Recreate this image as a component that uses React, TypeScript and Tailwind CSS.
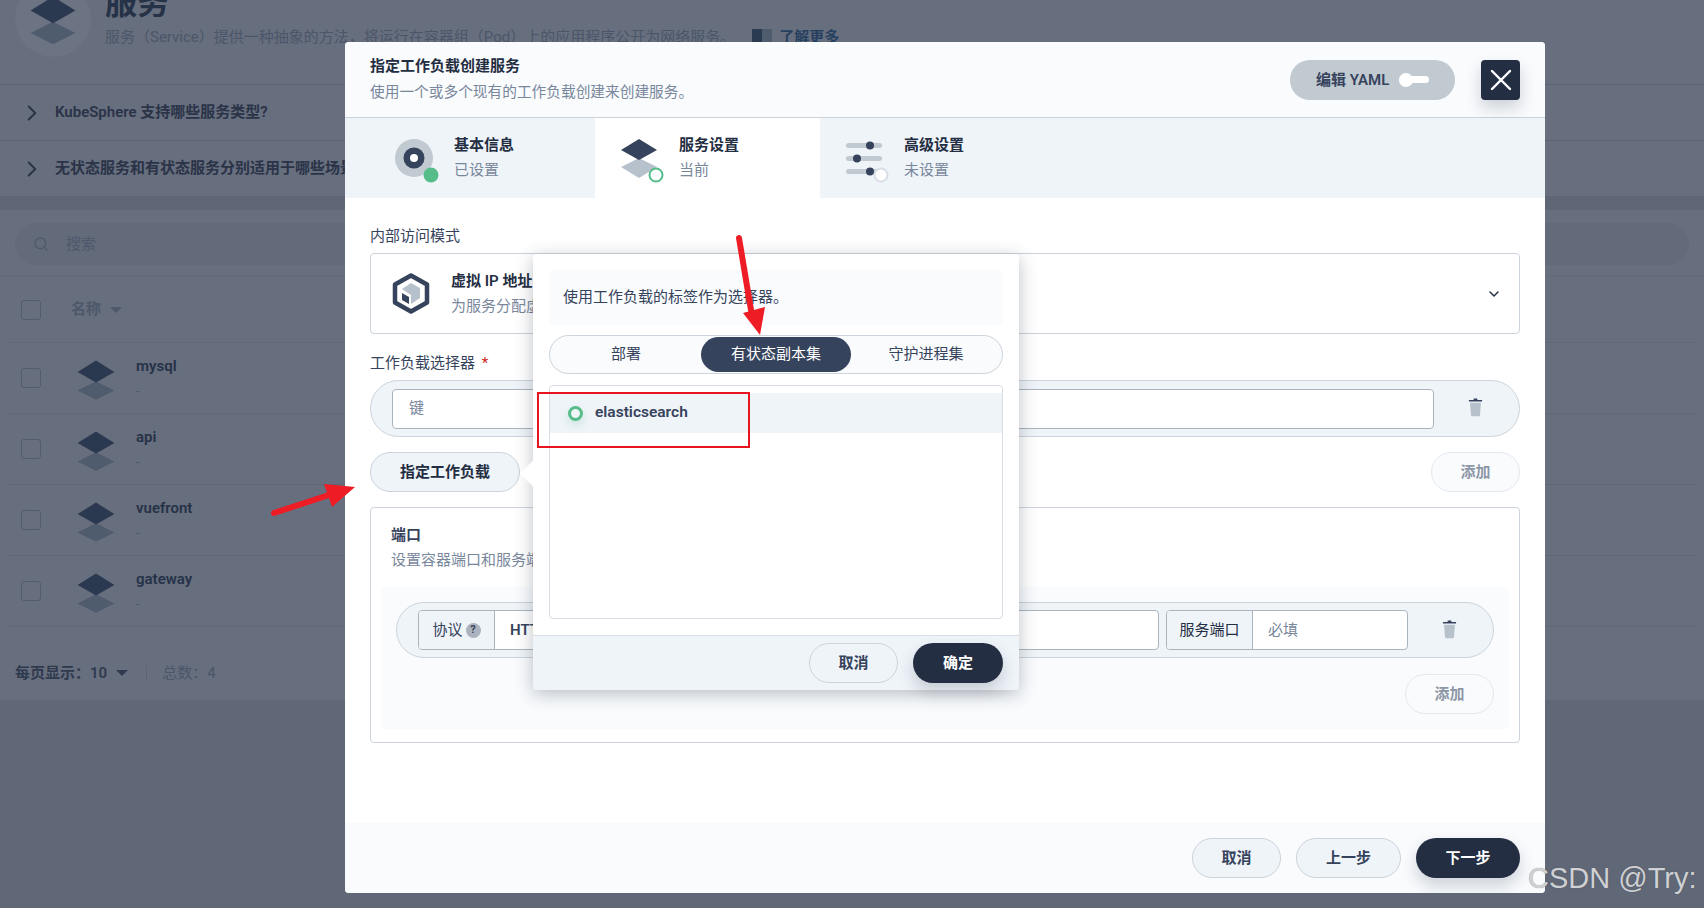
import { ChevronDown, ChevronRight, Search, X } from 'lucide-react';

const services = ['mysql', 'api', 'vuefront', 'gateway'];

const Layers = ({ top, bottom, className }: { top: string; bottom: string; className: string }) => (
  <svg viewBox="0 0 40 40" className={className}>
    <path d="M20 22 L36 30 L20 38 L4 30 Z" fill={bottom} />
    <path d="M20 4 L36 14 L20 23 L4 14 Z" fill={top} />
  </svg>
);

const Trash = () => (
  <svg viewBox="0 0 16 20" className="w-[15px] h-[19px]">
    <path d="M6 0.5h4v1.5h5v1.6H1V2h5z" fill="#36435c" />
    <path d="M2.2 5h11.6l-1 13a1.5 1.5 0 0 1-1.5 1.4H4.7a1.5 1.5 0 0 1-1.5-1.4z" fill="#b6c1cc" />
  </svg>
);

const PillButton = ({ label, className }: { label: string; className: string }) => (
  <div className={`h-10 rounded-[20px] flex items-center justify-center text-[15px] font-semibold ${className}`}>{label}</div>
);

const StepText = ({ title, sub }: { title: string; sub: string }) => (
  <div className="ml-[20px] -mt-[2px] flex flex-col gap-[5px]">
    <div className="text-[15px] leading-5 font-semibold text-[#242e42]">{title}</div>
    <div className="text-[15px] leading-5 text-[#79879c]">{sub}</div>
  </div>
);

export default function App() {
  return (
    <div
      className="relative w-[1704px] h-[908px] overflow-hidden bg-[#606777] text-[#36435c]"
      style={{ fontFamily: 'Roboto, "Noto Sans CJK SC", sans-serif' }}
    >
      {/* Page behind the dialog */}
      <div className="h-[700px] flex flex-col bg-[#676e7d]">
        <div className="h-[84px] -mt-[19px] pl-[15px] flex shrink-0">
          <div className="w-[76px] h-[76px] rounded-full bg-[#6c7383] flex items-center justify-center">
            <Layers top="#2b3950" bottom="#4f5c6e" className="w-[56px] h-[56px]" />
          </div>
          <div className="ml-[14px]">
            <div className="text-[32px] leading-[44px] font-bold text-[#263248]">服务</div>
            <div className="mt-[2px] flex items-center text-[15px] leading-5 text-[#4b566a] whitespace-nowrap">
              服务（Service）提供一种抽象的方法，将运行在容器组（Pod）上的应用程序公开为网络服务。
              <span className="ml-[17px] w-[10px] h-[16px] bg-[#2a3a50]" />
              <span className="w-[10px] h-[16px] bg-[#4f5c6e]" />
              <span className="ml-[7px] font-semibold text-[#26415f]">了解更多</span>
            </div>
          </div>
        </div>
        <div className="h-[56px] mt-[19px] border-t border-[#5c6373] flex items-center pl-[19px] shrink-0">
          <ChevronRight className="w-[26px] h-[26px] text-[#2a3348]" strokeWidth={1.8} />
          <span className="ml-[10px] text-[15px] font-semibold text-[#2a3348]">KubeSphere 支持哪些服务类型?</span>
        </div>
        <div className="h-[56px] border-t border-[#5c6373] flex items-center pl-[19px] shrink-0">
          <ChevronRight className="w-[26px] h-[26px] text-[#2a3348]" strokeWidth={1.8} />
          <span className="ml-[10px] text-[15px] font-semibold text-[#2a3348]">无状态服务和有状态服务分别适用于哪些场景?</span>
        </div>
        <div className="h-[14px] bg-[#5f6676] shrink-0" />
        <div className="h-[67px] px-[15px] pt-[13px] border-b border-[#626979] shrink-0">
          <div className="h-[42px] rounded-[21px] bg-[#636a7a] flex items-center pl-[18px]">
            <Search className="w-[16px] h-[16px] text-[#4d5a6c]" />
            <span className="ml-[17px] text-[15px] text-[#4d586b]">搜索</span>
          </div>
        </div>
        <div className="h-[66px] mx-[6px] pl-[15px] flex items-center border-b border-[#606777] shrink-0">
          <div className="w-5 h-5 rounded-[3px] border border-[#535c6e]" />
          <span className="ml-[30px] text-[15px] font-semibold text-[#4d586b]">名称</span>
          <span className="ml-[9px] w-0 h-0 border-x-[6px] border-x-transparent border-t-[6px] border-t-[#4d586b]" />
        </div>
        {services.map((name) => (
          <div key={name} className="h-[71px] mx-[6px] pl-[15px] flex items-center border-b border-[#606777] shrink-0">
            <div className="w-5 h-5 rounded-[3px] border border-[#535c6e]" />
            <Layers top="#2b3950" bottom="#4f5c6e" className="ml-[32px] w-[46px] h-[46px] mt-[1px]" />
            <div className="ml-[17px]">
              <div className="text-[15px] leading-5 font-semibold text-[#263248]">{name}</div>
              <div className="mt-[5px] text-[12px] leading-5 text-[#4b566a]">-</div>
            </div>
          </div>
        ))}
        <div className="pl-[15px] mt-[36px] flex items-center text-[15px] leading-5 shrink-0">
          <span className="font-semibold text-[#2f3a4f]">每页显示：10</span>
          <span className="ml-[9px] w-0 h-0 border-x-[6px] border-x-transparent border-t-[6px] border-t-[#2f3a4f]" />
          <span className="ml-[18px] w-px h-[16px] bg-[#5c6373]" />
          <span className="ml-[15px] text-[#4b566a]">总数：4</span>
        </div>
      </div>

      {/* Dialog */}
      <div className="absolute left-[345px] top-[42px] w-[1200px] h-[851px] flex flex-col bg-white rounded-[4px] overflow-hidden">
        <div className="h-[76px] shrink-0 bg-[#f9fbfd] border-b border-[#ccd3db] pl-[25px] pr-[25px] flex items-center">
          <div className="flex flex-col gap-[6px] -mt-[2px]">
            <div className="text-[15px] leading-5 font-semibold text-[#242e42]">指定工作负载创建服务</div>
            <div className="text-[14.7px] leading-5 text-[#79879c]">使用一个或多个现有的工作负载创建来创建服务。</div>
          </div>
          <div className="ml-auto h-10 w-[165px] rounded-[20px] bg-[#c1c9d1] flex items-center pl-[26px] text-[15px] font-semibold text-[#36435c]">
            <span className="pt-[1px]">编辑 YAML</span>
            <span className="ml-[10px] relative w-[30px] h-[14px] flex items-center">
              <span className="w-full h-[7px] rounded-full bg-white" />
              <span className="absolute left-0 top-0 w-[14px] h-[14px] rounded-full bg-white" />
            </span>
          </div>
          <div className="ml-[26px] w-[39px] h-10 rounded-[4px] bg-[#242e42] flex items-center justify-center text-white shadow-[0_8px_16px_0_rgba(36,46,66,0.2)]">
            <X className="w-[36px] h-[36px]" strokeWidth={1.6} />
          </div>
        </div>

        <div className="h-[80px] shrink-0 bg-[#eff4f9] flex">
          <div className="w-[250px] pl-[49px] flex items-center">
            <svg viewBox="0 0 40 40" className="w-10 h-10 overflow-visible">
              <circle cx="20" cy="20" r="19" fill="#c1c9d1" />
              <circle cx="20" cy="20" r="10.5" fill="#36435c" />
              <circle cx="20" cy="20" r="4" fill="#fff" />
              <circle cx="37" cy="37" r="7.5" fill="#55bc8a" />
            </svg>
            <StepText title="基本信息" sub="已设置" />
          </div>
          <div className="w-[225px] pl-[24px] bg-white flex items-center">
            <svg viewBox="0 0 40 40" className="w-10 h-10 overflow-visible">
              <path d="M20 20 L38 29 L20 40 L2 29 Z" fill="#b6c1cc" />
              <path d="M20 1 L38 12 L20 22 L2 12 Z" fill="#36435c" />
              <circle cx="37" cy="37" r="6.5" fill="#fff" stroke="#55bc8a" strokeWidth="2" />
            </svg>
            <StepText title="服务设置" sub="当前" />
          </div>
          <div className="w-[225px] pl-[24px] flex items-center">
            <svg viewBox="0 0 40 40" className="w-10 h-10 overflow-visible">
              <rect x="2" y="5" width="36" height="5" rx="2.5" fill="#c1c9d1" />
              <rect x="2" y="18" width="36" height="5" rx="2.5" fill="#c1c9d1" />
              <rect x="2" y="31" width="36" height="5" rx="2.5" fill="#c1c9d1" />
              <circle cx="26" cy="7.5" r="4" fill="#36435c" />
              <circle cx="13" cy="20.5" r="4" fill="#36435c" />
              <circle cx="26" cy="33.5" r="4" fill="#36435c" />
              <circle cx="37" cy="37" r="6.5" fill="#fff" stroke="#d8dee5" strokeWidth="2" />
            </svg>
            <StepText title="高级设置" sub="未设置" />
          </div>
        </div>

        <div className="flex-1 px-[25px] pt-[28px] text-[15px]">
          <div className="leading-5 text-[#36435c]">内部访问模式</div>
          <div className="mt-[7px] h-[81px] border border-[#ccd3db] rounded-[4px] flex items-center pl-[21px] pr-[17px]">
            <svg viewBox="0 0 38 41" className="w-[38px] h-[41px]">
              <path d="M19 2.5 L35 11.5 V29.5 L19 38.5 L3 29.5 V11.5 Z" fill="#fff" stroke="#36435c" strokeWidth="4.5" strokeLinejoin="round" />
              <path d="M19 10 L28 15 V25 L19 31 V22 L10 16 Z" fill="#b6c1cc" />
              <path d="M10 20 L17 24 V31 L10 27 Z" fill="#36435c" />
            </svg>
            <div className="ml-[21px] flex flex-col gap-[5px]">
              <div className="leading-5 font-semibold text-[#242e42]">虚拟 IP 地址</div>
              <div className="leading-5 text-[#79879c]">为服务分配虚拟 IP 地址</div>
            </div>
            <ChevronDown className="ml-auto w-[16px] h-[16px] text-[#242e42]" strokeWidth={2.2} />
          </div>

          <div className="mt-[19px] leading-5 text-[#36435c]">
            工作负载选择器 <span className="ml-[3px] text-[#ca2621]">*</span>
          </div>
          <div className="mt-[7px] h-[57px] rounded-[29px] bg-[#eff4f9] border border-[#ccd3db] flex items-center pl-[21px]">
            <div className="w-[1042px] h-10 bg-white rounded-[4px] border border-[#abb4be] flex items-center pl-[16px] text-[#79879c]">键</div>
            <div className="ml-[34px] -mt-[2px]"><Trash /></div>
          </div>

          <div className="mt-[15px] flex justify-between">
            <PillButton label="指定工作负载" className="w-[150px] bg-[#eff4f9] border border-[#ccd3db] text-[#242e42]" />
            <PillButton label="添加" className="w-[89px] bg-[#f9fbfd] border border-[#e3e9ef] text-[#8d97a6]" />
          </div>

          <div className="mt-[15px] h-[236px] border border-[#ccd3db] rounded-[4px] pt-[17px]">
            <div className="px-[20px] leading-5 font-semibold text-[#36435c]">端口</div>
            <div className="mt-[5px] px-[20px] leading-5 text-[#79879c]">设置容器端口和服务端口。</div>
            <div className="mt-[17px] mx-[10px] h-[142px] bg-[#f9fbfd] rounded-[4px] px-[15px] pt-[15px]">
              <div className="h-[56px] rounded-[28px] bg-[#eff4f9] border border-[#ccd3db] flex items-center pl-[21px]">
                <div className="w-[741px] h-10 rounded-[4px] border border-[#abb4be] bg-white flex items-center overflow-hidden">
                  <div className="w-[76px] h-full bg-[#eff4f9] border-r border-[#abb4be] flex items-center justify-center text-[#36435c]">
                    协议
                    <span className="ml-[3px] w-[15px] h-[15px] rounded-full bg-[#abb4be] text-[11px] font-bold flex items-center justify-center">?</span>
                  </div>
                  <span className="ml-[15px] font-semibold text-[#36435c]">HTTP</span>
                </div>
                <div className="ml-[7px] w-[242px] h-10 rounded-[4px] border border-[#abb4be] bg-white flex items-center overflow-hidden">
                  <div className="w-[86px] h-full bg-[#eff4f9] border-r border-[#abb4be] flex items-center justify-center text-[#242e42]">服务端口</div>
                  <span className="ml-[15px] text-[#79879c]">必填</span>
                </div>
                <div className="ml-[34px] -mt-[2px]"><Trash /></div>
              </div>
              <div className="mt-[16px] flex justify-end">
                <PillButton label="添加" className="w-[89px] bg-[#f9fbfd] border border-[#e3e9ef] text-[#8d97a6]" />
              </div>
            </div>
          </div>
        </div>

        <div className="h-[70px] shrink-0 bg-[#f9fbfd] pr-[25px] flex items-center justify-end gap-[15px]">
          <PillButton label="取消" className="w-[89px] bg-[#eff4f9] border border-[#ccd3db] text-[#36435c]" />
          <PillButton label="上一步" className="w-[105px] bg-[#eff4f9] border border-[#ccd3db] text-[#36435c]" />
          <PillButton label="下一步" className="w-[104px] bg-[#242e42] text-white shadow-[0_8px_16px_0_rgba(36,46,66,0.2)]" />
        </div>
      </div>

      {/* Workload picker popover */}
      <div className="absolute left-[533px] top-[254px] w-[486px] h-[436px] flex flex-col bg-white rounded-[4px] shadow-[0_4px_18px_0_rgba(36,46,66,0.3)]">
        <div className="absolute -left-[9.5px] top-[209.5px] w-[19px] h-[19px] rotate-45 bg-white" />
        <div className="relative px-[16px] pt-[16px] flex-1">
          <div className="h-[55px] rounded-[4px] bg-[#f9fbfd] flex items-center pl-[14px] text-[15px] text-[#36435c]">使用工作负载的标签作为选择器。</div>
          <div className="mt-[10px] h-[39px] rounded-[20px] border border-[#ccd3db] bg-[#f9fbfd] p-px grid grid-cols-3 text-[15px] text-[#36435c]">
            <div className="flex items-center justify-center">部署</div>
            <div className="flex items-center justify-center rounded-[18px] bg-[#36435c] text-white">有状态副本集</div>
            <div className="flex items-center justify-center">守护进程集</div>
          </div>
          <div className="mt-[11px] h-[234px] rounded-[4px] border border-[#d8dee5] pt-[7px]">
            <div className="h-10 bg-[#eff4f9] flex items-center pl-[18px]">
              <span className="w-[15px] h-[15px] rounded-full border-[3px] border-[#55bc8a] shadow-[0_4px_8px_0_rgba(85,188,138,0.25)]" />
              <span className="ml-[12px] text-[15.5px] font-semibold text-[#36435c]">elasticsearch</span>
            </div>
          </div>
        </div>
        <div className="relative h-[55px] shrink-0 bg-[#eff4f9] border-t border-[#d8dee5] rounded-b-[4px] pr-[16px] flex items-center justify-end gap-[15px]">
          <PillButton label="取消" className="w-[89px] bg-[#eff4f9] border border-[#ccd3db] text-[#36435c]" />
          <PillButton label="确定" className="w-[90px] bg-[#242e42] text-white shadow-[0_8px_16px_0_rgba(36,46,66,0.2)]" />
        </div>
      </div>

      {/* Annotations drawn on the screenshot */}
      <div className="absolute left-[537px] top-[392px] w-[213px] h-[56px] border-2 border-[#e8141f]" />
      <svg viewBox="0 0 1704 908" className="absolute left-0 top-0 w-[1704px] h-[908px] pointer-events-none">
        <path d="M739 238 L751 310" stroke="#ee1c25" strokeWidth="6" strokeLinecap="round" fill="none" />
        <path d="M743 313 L765 307 L760 335 Z" fill="#ee1c25" />
        <path d="M274 513 L332 494" stroke="#ee1c25" strokeWidth="6" strokeLinecap="round" fill="none" />
        <path d="M324 484 L355 487 L332 507 Z" fill="#ee1c25" />
      </svg>
      <div
        className="absolute left-[1528px] top-[861px] text-[29px] leading-[34px] text-[#cfd1d4] whitespace-nowrap [text-shadow:0_0_1px_rgba(60,60,60,0.6)]"
        style={{ fontFamily: '"Liberation Sans", sans-serif' }}
      >
        CSDN @Try:
      </div>
    </div>
  );
}
